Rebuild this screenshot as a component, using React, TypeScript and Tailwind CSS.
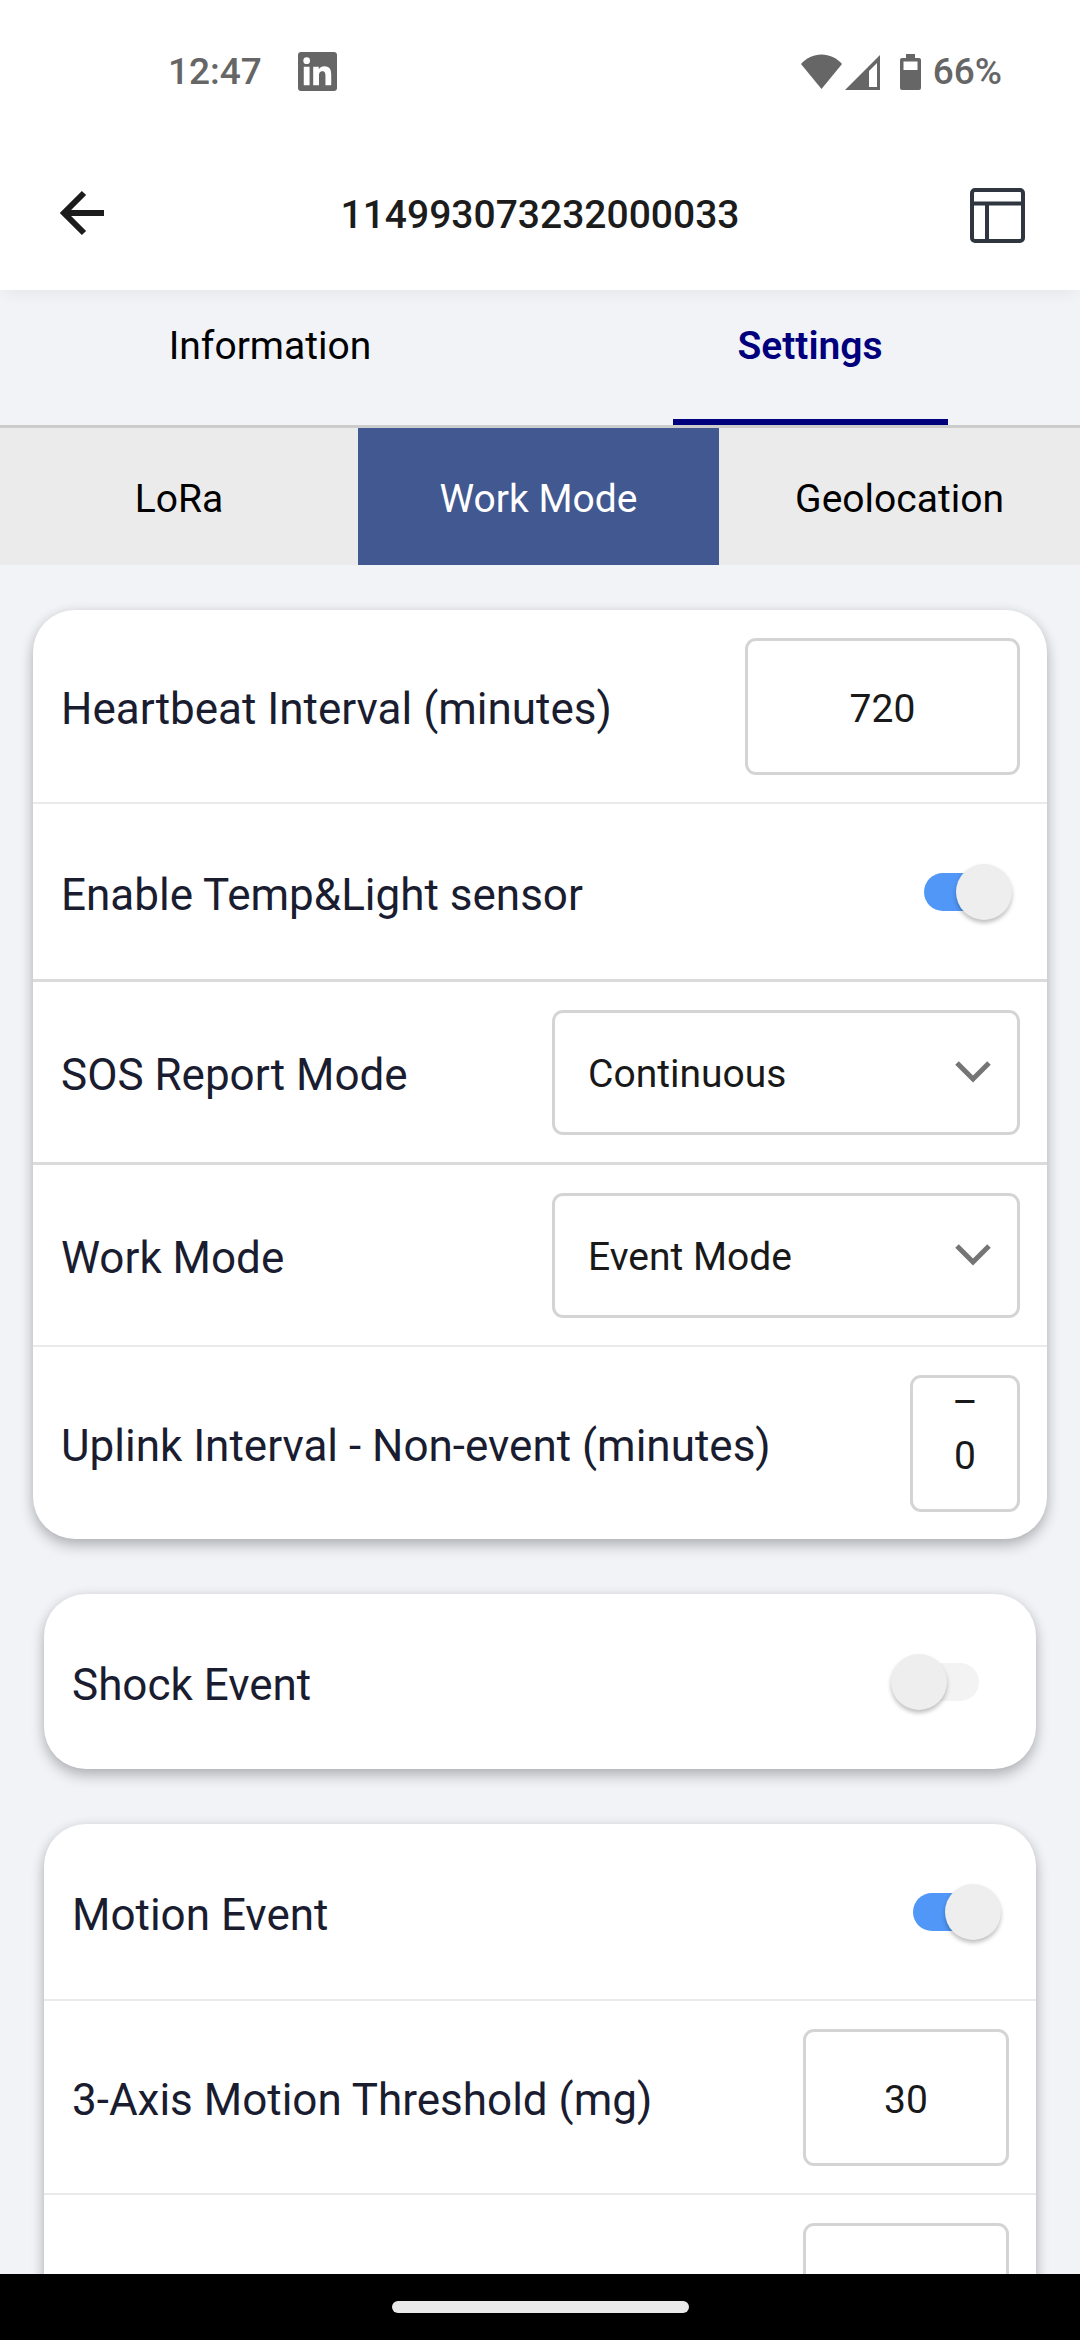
import { useState, type ReactNode } from 'react';

const FIELD =
  'rounded-[11px] bg-transparent text-[39px] text-[#191919] ring-[3px] ring-inset ring-[#d4d4d4] outline-none';

function StatusBar() {
  return (
    <div className="flex h-[140px] shrink-0 items-center pt-[3px] pr-[78px] pl-[168px] text-[37px] leading-[46px] font-medium text-[#666]">
      <time>12:47</time>
      <svg className="ml-9 size-[39px]" viewBox="0 0 24 24" fill="currentColor" aria-label="LinkedIn notification">
        <path d="M20.447 20.452h-3.554v-5.569c0-1.328-.027-3.037-1.852-3.037-1.853 0-2.136 1.445-2.136 2.939v5.667H9.351V9h3.414v1.561h.046c.477-.9 1.637-1.85 3.37-1.85 3.601 0 4.267 2.37 4.267 5.455v6.286zM5.337 7.433a2.062 2.062 0 0 1-2.063-2.065 2.064 2.064 0 1 1 2.063 2.065zm1.782 13.019H3.555V9h3.564v11.452zM22.225 0H1.771C.792 0 0 .774 0 1.729v20.542C0 23.227.792 24 1.771 24h20.451C23.2 24 24 23.227 24 22.271V1.729C24 .774 23.2 0 22.222 0h.003z" />
      </svg>
      <svg className="ml-auto h-9 w-[41px]" viewBox="0 0 41 36" fill="currentColor" aria-label="Wi-Fi">
        <path d="M0 10C5.500 4 12.500 .5 20.500 .5S35.500 4 41 10L20.500 35Z" />
      </svg>
      <svg className="ml-[3px] h-9 w-[35px]" viewBox="0 0 35 36" fill="currentColor" aria-label="Mobile signal">
        <path fillRule="evenodd" d="M35 1V36H0ZM32 9L24 17V33H32Z" />
      </svg>
      <svg className="ml-5 h-9 w-[21px]" viewBox="0 0 21 36" fill="currentColor" aria-label="Battery">
        <path
          fillRule="evenodd"
          d="M6 0h9v4h4a2 2 0 0 1 2 2v28a2 2 0 0 1-2 2H2a2 2 0 0 1-2-2V6a2 2 0 0 1 2-2h4ZM3.500 7.500V16h14V7.500Z"
        />
      </svg>
      <span className="ml-3">66%</span>
    </div>
  );
}

function Header() {
  return (
    <header className="relative z-10 grid h-[150px] shrink-0 grid-cols-[1fr_auto_1fr] items-center bg-white px-[55px] shadow-[0_10px_12px_-4px_rgba(0,0,0,0.04)]">
      <button type="button" aria-label="Back" className="justify-self-start">
        <svg className="size-[54px]" viewBox="0 0 54 54" fill="none" stroke="#1c1c1c" strokeWidth="6">
          <path d="M49 25H9M29 5L9 25L29 45" />
        </svg>
      </button>
      <h1 className="text-[39px] leading-[46px] font-medium text-[#1c1c1c]">114993073232000033</h1>
      <button type="button" aria-label="Layout" className="justify-self-end">
        <svg className="size-[55px]" viewBox="0 0 55 55" fill="none" stroke="#2f3640" strokeWidth="4">
          <rect x="2" y="2" width="51" height="51" rx="3" />
          <path d="M2 15.500H53M17 15.500V53" />
        </svg>
      </button>
    </header>
  );
}

function Switch({ id, initial }: { id: string; initial: boolean }) {
  const [on, setOn] = useState(initial);
  return (
    <span className="relative mr-2 flex h-14 w-[110px] shrink-0 items-center">
      <input
        id={id}
        type="checkbox"
        role="switch"
        checked={on}
        onChange={(e) => setOn(e.target.checked)}
        className="peer mx-auto h-[38px] w-[66px] appearance-none rounded-full bg-[#f3f3f3] checked:bg-[#5197f7]"
      />
      <span className="pointer-events-none absolute left-0 size-14 rounded-full bg-[#eee] shadow-[0_3px_4px_rgba(0,0,0,0.25)] peer-checked:right-0 peer-checked:left-auto" />
    </span>
  );
}

function Row({ id, label, height, divider, children }: {
  id: string;
  label: string;
  height: 'tall' | 'switch' | 'select';
  divider: 'none' | 'thin' | 'thick';
  children: ReactNode;
}) {
  const heights = { tall: 'h-[192px]', switch: 'h-[175px]', select: 'h-[180px]' };
  const dividers = {
    none: '',
    thin: 'border-b-2 border-[#eaeaea]',
    thick: 'border-b-3 border-[#dadada]',
  };
  return (
    <div className={dividers[divider]}>
      <div className={`flex items-center justify-between pr-[27px] pl-7 ${heights[height]}`}>
        <label htmlFor={id} className="pt-1.5 text-[44px] leading-[52px] text-[#1a1c30]">
          {label}
        </label>
        {children}
      </div>
    </div>
  );
}

function Dropdown({ id, value, options }: { id: string; value: string; options: string[] }) {
  return (
    <span className="relative flex w-[468px] items-center">
      <select id={id} defaultValue={value} className={`h-[125px] w-full appearance-none pt-1 pl-9 ${FIELD}`}>
        {options.map((o) => (
          <option key={o}>{o}</option>
        ))}
      </select>
      <svg
        className="pointer-events-none absolute right-[29px] h-[22px] w-9"
        viewBox="0 0 36 22"
        fill="none"
        stroke="#757575"
        strokeWidth="5"
      >
        <path d="M2 2L18 18L34 2" />
      </svg>
    </span>
  );
}

function Card({ children, className }: { children: ReactNode; className: string }) {
  return (
    <section
      className={`rounded-[42px] bg-white shadow-[0_7px_14px_rgba(0,0,0,0.24),0_0_12px_rgba(0,0,0,0.07)] ${className}`}
    >
      {children}
    </section>
  );
}

export default function App() {
  return (
    <div className="flex h-screen flex-col bg-white font-[Roboto,sans-serif]">
      <StatusBar />
      <Header />
      <main className="min-h-0 flex-1 overflow-hidden bg-[#f1f3f7]">
        <nav className="grid h-[138px] grid-cols-2 border-b-3 border-[#ccc] text-[39px] leading-[46px]">
          <button type="button" className="flex flex-col items-center pt-[33px] text-black">
            Information
          </button>
          <button type="button" className="flex flex-col items-center justify-between pt-[33px] font-semibold text-[#00007c]">
            Settings
            <span className="h-[6px] w-[275px] bg-[#00007c]" />
          </button>
        </nav>
        <nav className="grid h-[137px] grid-cols-[358fr_361fr_361fr] bg-[#ebebeb] text-[39px] leading-[46px] text-black">
          <button type="button" className="pt-1">LoRa</button>
          <button type="button" className="bg-[#425890] pt-1 text-white">Work Mode</button>
          <button type="button" className="pt-1">Geolocation</button>
        </nav>

        <div className="flex flex-col gap-[55px] pt-[45px]">
          <Card className="mx-[33px]">
            <Row id="heartbeat" label="Heartbeat Interval (minutes)" height="tall" divider="thin">
              <input id="heartbeat" defaultValue="720" className={`h-[137px] w-[275px] pt-1.5 text-center ${FIELD}`} />
            </Row>
            <Row id="temp-light" label="Enable Temp&Light sensor" height="switch" divider="thick">
              <Switch id="temp-light" initial />
            </Row>
            <Row id="sos" label="SOS Report Mode" height="select" divider="thick">
              <Dropdown id="sos" value="Continuous" options={['Single', 'Continuous']} />
            </Row>
            <Row id="work-mode" label="Work Mode" height="select" divider="thin">
              <Dropdown id="work-mode" value="Event Mode" options={['Standby Mode', 'Periodic Mode', 'Event Mode']} />
            </Row>
            <Row id="uplink" label="Uplink Interval - Non-event (minutes)" height="tall" divider="none">
              <textarea
                id="uplink"
                defaultValue={'–\n0'}
                className={`h-[137px] w-[110px] resize-none overflow-hidden text-center leading-[54px] ${FIELD}`}
              />
            </Row>
          </Card>

          <Card className="mx-11">
            <Row id="shock" label="Shock Event" height="switch" divider="none">
              <Switch id="shock" initial={false} />
            </Row>
          </Card>

          <Card className="mx-11">
            <Row id="motion" label="Motion Event" height="switch" divider="thin">
              <Switch id="motion" initial />
            </Row>
            <Row id="motion-threshold" label="3-Axis Motion Threshold (mg)" height="tall" divider="thin">
              <input id="motion-threshold" defaultValue="30" className={`h-[137px] w-[206px] pt-1.5 text-center ${FIELD}`} />
            </Row>
            <div className="flex h-[192px] items-center justify-end pr-[27px] pl-7">
              <input aria-label="Motion Start Threshold (mg)" className={`h-[137px] w-[206px] pt-1.5 text-center ${FIELD}`} />
            </div>
          </Card>
        </div>
      </main>
      <footer className="flex h-[66px] shrink-0 items-center justify-center bg-black">
        <span className="h-3 w-[297px] rounded-full bg-[#eaeaea]" />
      </footer>
    </div>
  );
}
